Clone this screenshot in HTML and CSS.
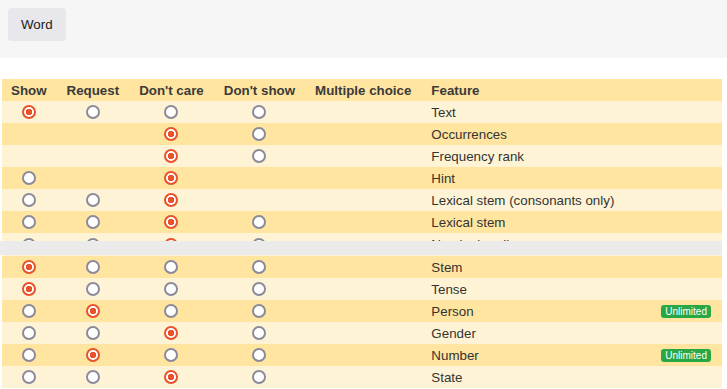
FILE: index.html
```html
<!DOCTYPE html>
<html lang="en">
<head>
    <meta charset="UTF-8">
    <title>Features</title>
    <link rel="stylesheet" href="styles.css">
</head>
<body>
    <!-- Top bar -->
    <div class="topbar">
        <button class="btn">Word</button>
    </div>

    <!-- Feature table -->
    <table class="features">
        <thead>
            <tr>
                <th>Show</th>
                <th>Request</th>
                <th>Don't care</th>
                <th>Don't show</th>
                <th>Multiple choice</th>
                <th class="feature">Feature</th>
            </tr>
        </thead>
        <tbody>
            <tr>
                <td><input type="radio" name="f1" checked></td>
                <td><input type="radio" name="f1"></td>
                <td><input type="radio" name="f1"></td>
                <td><input type="radio" name="f1"></td>
                <td></td>
                <td class="feature">Text</td>
            </tr>
            <tr>
                <td></td>
                <td></td>
                <td><input type="radio" name="f2" checked></td>
                <td><input type="radio" name="f2"></td>
                <td></td>
                <td class="feature">Occurrences</td>
            </tr>
            <tr>
                <td></td>
                <td></td>
                <td><input type="radio" name="f3" checked></td>
                <td><input type="radio" name="f3"></td>
                <td></td>
                <td class="feature">Frequency rank</td>
            </tr>
            <tr>
                <td><input type="radio" name="f4"></td>
                <td></td>
                <td><input type="radio" name="f4" checked></td>
                <td></td>
                <td></td>
                <td class="feature">Hint</td>
            </tr>
            <tr>
                <td><input type="radio" name="f5"></td>
                <td><input type="radio" name="f5"></td>
                <td><input type="radio" name="f5" checked></td>
                <td></td>
                <td></td>
                <td class="feature">Lexical stem (consonants only)</td>
            </tr>
            <tr>
                <td><input type="radio" name="f6"></td>
                <td><input type="radio" name="f6"></td>
                <td><input type="radio" name="f6" checked></td>
                <td><input type="radio" name="f6"></td>
                <td></td>
                <td class="feature">Lexical stem</td>
            </tr>
            <tr class="tall">
                <td><input type="radio" name="f7"></td>
                <td><input type="radio" name="f7"></td>
                <td><input type="radio" name="f7" checked></td>
                <td><input type="radio" name="f7"></td>
                <td></td>
                <td class="feature">Nominal ending</td>
            </tr>
            <tr>
                <td><input type="radio" name="f8" checked></td>
                <td><input type="radio" name="f8"></td>
                <td><input type="radio" name="f8"></td>
                <td><input type="radio" name="f8"></td>
                <td></td>
                <td class="feature">Stem</td>
            </tr>
            <tr>
                <td><input type="radio" name="f9" checked></td>
                <td><input type="radio" name="f9"></td>
                <td><input type="radio" name="f9"></td>
                <td><input type="radio" name="f9"></td>
                <td></td>
                <td class="feature">Tense</td>
            </tr>
            <tr>
                <td><input type="radio" name="f10"></td>
                <td><input type="radio" name="f10" checked></td>
                <td><input type="radio" name="f10"></td>
                <td><input type="radio" name="f10"></td>
                <td></td>
                <td class="feature">Person <span class="badge">Unlimited</span></td>
            </tr>
            <tr>
                <td><input type="radio" name="f11"></td>
                <td><input type="radio" name="f11"></td>
                <td><input type="radio" name="f11" checked></td>
                <td><input type="radio" name="f11"></td>
                <td></td>
                <td class="feature">Gender</td>
            </tr>
            <tr>
                <td><input type="radio" name="f12"></td>
                <td><input type="radio" name="f12" checked></td>
                <td><input type="radio" name="f12"></td>
                <td><input type="radio" name="f12"></td>
                <td></td>
                <td class="feature">Number <span class="badge">Unlimited</span></td>
            </tr>
            <tr>
                <td><input type="radio" name="f13"></td>
                <td><input type="radio" name="f13"></td>
                <td><input type="radio" name="f13" checked></td>
                <td><input type="radio" name="f13"></td>
                <td></td>
                <td class="feature">State</td>
            </tr>
        </tbody>
    </table>

    <!-- Strip lying over the table -->
    <div class="overlay-strip"></div>
</body>
</html>
```

FILE: styles.css
```css
/* Base */
* {
    box-sizing: border-box;
}

body {
    margin: 0;
    font-family: "Liberation Sans", Arial, sans-serif;
    font-size: 13.33px;
    color: #333;
    background: white;
    position: relative;
}

/* Top bar */
.topbar {
    background: #f6f6f6;
    height: 58px;
    padding: 8px;
}

.btn {
    height: 33px;
    padding: 0 13px;
    border: none;
    border-radius: 4px;
    background: #e8e8ec;
    color: #1a1a1a;
    font-family: inherit;
    font-size: 13.33px;
}

/* Feature table */
.features {
    margin: 21px 0 0 2px;
    width: 720px;
    border-collapse: collapse;
}

.features th,
.features td {
    height: 22px;
    padding: 0 10px;
    white-space: nowrap;
    text-align: center;
    vertical-align: middle;
}

.features th:first-child,
.features td:first-child {
    padding-left: 9px;
}

.features th {
    font-weight: bold;
    color: #3a3a3a;
    text-align: left;
}

.features .feature {
    width: 100%;
    text-align: left;
    padding-right: 11px;
}

.features thead tr {
    background: #ffe59f;
}

.features tbody tr:nth-child(odd) {
    background: #fff3d5;
}

.features tbody tr:nth-child(even) {
    background: #ffe59f;
}

.features tr.tall td {
    height: 23px;
}

/* Radio buttons */
.features input[type="radio"] {
    appearance: none;
    -webkit-appearance: none;
    display: block;
    margin: 0 auto;
    width: 14px;
    height: 14px;
    border: 2px solid #8b8a9a;
    border-radius: 50%;
    background: white;
}

.features input[type="radio"]:checked {
    border-color: #e9522b;
    background: radial-gradient(circle, #e9522b 0 3px, white 3.5px);
}

/* Badge */
.badge {
    float: right;
    margin-top: 1px;
    padding: 0 4px;
    height: 13px;
    line-height: 13px;
    border-radius: 3px;
    background: #28a745;
    color: white;
    font-size: 10px;
}

/* Strip */
.overlay-strip {
    position: absolute;
    top: 241px;
    left: 0;
    width: 722px;
    height: 14px;
    background: #ebebeb;
}
```
